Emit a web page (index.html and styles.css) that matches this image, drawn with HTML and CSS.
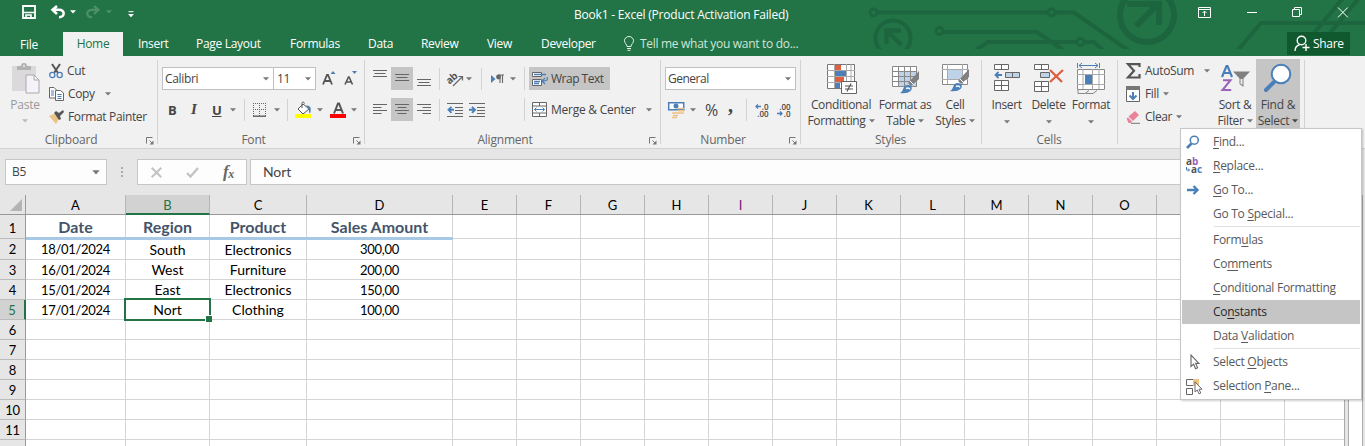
FILE: index.html
```html
<!DOCTYPE html>
<html lang="en">
<head>
<meta charset="utf-8">
<title>Book1 - Excel</title>
<link rel="stylesheet" href="styles.css">
</head>
<body>
<svg class="defs" width="0" height="0">
  <defs>
    <symbol id="dd" viewBox="0 0 6 4"><path d="M0 0.200h6L3 3.600z" fill="currentColor"/></symbol>
    <symbol id="launch" viewBox="0 0 8 8"><path d="M0.5 6.5v-6h6M3.5 3.5l3 3" fill="none" stroke="#777"/><path d="M7.5 3.5v4h-4z" fill="#777"/></symbol>
    <symbol id="brush" viewBox="0 0 20 24"><path d="M19 1v8l-8 7-3-3z" fill="#808080"/><path d="M10 11l3.500 3.500" stroke="#fff" stroke-width="1"/><path d="M0 23c4-1 2-8 8-8 3 0 5 3 3 5.500-2.500 3-8 3-11 2.500z" fill="#4a7fb8"/><path d="M6 18.500c2-1 4-.5 3.500 1" stroke="#fff" stroke-width="1.400" fill="none"/></symbol>
    <symbol id="cursor" viewBox="0 0 10 16"><path d="M1 1v11.500l2.600-2.300 2 4.500 2-.9-2-4.400H9z" fill="#fff" stroke="#666" stroke-width="1.100"/></symbol>
  </defs>
</svg>

<header class="top">
  <svg class="art" width="505" height="49" viewBox="860 0 505 49" fill="none" stroke="#1c653e" stroke-width="4">
    <circle cx="873.500" cy="12.500" r="3.500" stroke-width="2.800"/><path d="M877 12.500h170M1055 12.500h19l56 39"/><circle cx="1051.500" cy="12.500" r="3.500" stroke-width="2.800"/>
    <circle cx="893" cy="38" r="17.500"/><path d="M886.500 44V30.500H901M887 31l14.500 14" stroke-width="4.500"/>
    <circle cx="939.500" cy="31" r="3.500" stroke-width="2.800"/><path d="M943 32h94l26 18M976 50l12-8h88M1084 42h10l10 9"/><circle cx="1080.500" cy="42" r="3.500" stroke-width="2.800"/>
    <circle cx="1147" cy="15" r="27" stroke-width="6"/><path d="M1127 4h32v21M1158 4l-22 22" stroke-width="6"/>
    <path d="M1238 50l23-27h104"/><path d="M1314 33l29-35M1330 33l29-35"/>
  </svg>
  <div class="titlebar">
    <div class="quick">
      <svg width="14" height="14" viewBox="0 0 14 14"><path d="M1 1h12v12H1z" fill="none" stroke="#fff" stroke-width="1.800"/><path d="M1 7.500h12M4 13v-3h5v3" stroke="#fff" stroke-width="1.600" fill="none"/></svg>
      <svg class="undo" width="14" height="14" viewBox="0 0 14 14"><path d="M6 1L1.500 4.800 6 9M2 4.800h6c6.500 0 6 7.400 0 7.400" fill="none" stroke="#fff" stroke-width="2.500"/></svg>
      <svg class="tri" width="6" height="4"><use href="#dd"/></svg>
      <svg class="redo" width="14" height="14" viewBox="0 0 14 14"><path d="M8 1l4.500 3.800L8 9M12 4.800H6c-6.500 0-6 7.400 0 7.400" fill="none" stroke="#4f9069" stroke-width="2.200"/></svg>
      <svg class="tri dim" width="6" height="4"><use href="#dd"/></svg>
      <svg class="more" width="6" height="7" viewBox="0 0 6 7"><path d="M.5 .7h5" stroke="#fff"/><path d="M0 3h6L3 6.300z" fill="#fff"/></svg>
    </div>
    <div class="title">Book1 - Excel (Product Activation Failed)</div>
    <div class="win">
      <svg width="13" height="11" viewBox="0 0 13 11" fill="none" stroke="#fff"><path d="M.5 .5h12v10H.5zM.5 2.500h12M6.500 9V4M4.500 6l2-2 2 2"/></svg>
      <svg width="10" height="11" viewBox="0 0 10 11"><path d="M0 5.500h10" stroke="#fff"/></svg>
      <svg width="10" height="11" viewBox="0 0 10 11" fill="none" stroke="#fff"><path d="M.5 2.500h7v7h-7zM2.500 2.500v-2h7v7H7.500"/></svg>
      <svg width="10" height="11" viewBox="0 0 10 11" stroke="#fff"><path d="M0 .5l9.800 9.800M9.800 .5L0 10.300"/></svg>
    </div>
  </div>
  <nav class="tabs">
    <span class="tab file">File</span><span class="tab on">Home</span><span class="tab t3">Insert</span><span class="tab t4">Page Layout</span><span class="tab t5">Formulas</span><span class="tab t6">Data</span><span class="tab t7">Review</span><span class="tab t8">View</span><span class="tab t9">Developer</span>
    <span class="tell"><svg width="10" height="15" viewBox="0 0 10 15" fill="none" stroke="#e3f1e8"><path d="M3 10.500c0-2.500-2.500-3-2.500-5.800a4.500 4.200 0 0 1 9 0c0 2.800-2.500 3.300-2.500 5.800zM3 12.500h4M3.500 14.300h3"/></svg>Tell me what you want to do...</span>
    <span class="share"><svg width="16" height="17" viewBox="0 0 16 17" fill="none" stroke="#fff" stroke-width="1.400"><circle cx="7.500" cy="5.500" r="4.300"/><path d="M1 16c0-3 1.500-5.500 4.500-6.300M12 9v7M8.500 12.500h7"/></svg>Share</span>
  </nav>
</header>

<section class="ribbon">
  <div class="group g-clip">
    <div class="body">
      <div class="big paste"><svg width="29" height="31" viewBox="0 0 29 31"><path d="M1 3h24v25H1z" fill="#dcd9dc"/><path d="M6 7V3h4a3 3 0 0 1 6 0h4v4z" fill="#b3b3b3"/><circle cx="13" cy="3" r="1" fill="#eee"/><path d="M15 12h8l5 5v13H15z" fill="#f6f2f9" stroke="#aaa"/><path d="M23 12v5h5" fill="none" stroke="#aaa"/></svg><span>Paste</span><svg class="arr" width="6" height="4"><use href="#dd"/></svg></div>
      <div class="stack">
        <div class="line"><svg width="14" height="16" viewBox="0 0 14 16" fill="none"><path d="M3 1l6 9M11 1L5 10" stroke="#555" stroke-width="2"/><circle cx="3.300" cy="12" r="2.600" stroke="#4a7fb8" stroke-width="1.300"/><circle cx="10.700" cy="12" r="2.600" stroke="#4a7fb8" stroke-width="1.300"/></svg><span>Cut</span></div>
        <div class="line"><svg width="15" height="14" viewBox="0 0 15 14" fill="#fff" stroke="#666"><path d="M.5 .5H5l2.500 2.500v8h-7z"/><path d="M6.500 3.500h5l3 2.500v7.500h-8z"/><path d="M2 4h3M2 6h3M2 8h3M8.500 7.500h4M8.500 9.500h4M8.500 11.500h4" stroke="#4a7fb8"/></svg><span>Copy</span><svg class="arr wide" width="6" height="4"><use href="#dd"/></svg></div>
        <div class="line"><svg width="15" height="14" viewBox="0 0 15 14"><path d="M0 6l5-2 5 5-3 5z" fill="#edc283"/><path d="M5 3l2-2 3 2 4-3 1 2-4 4 1 3-2 1z" fill="#555"/></svg><span>Format Painter</span></div>
      </div>
    </div>
    <div class="label">Clipboard<svg class="launch" width="8" height="8"><use href="#launch"/></svg></div>
  </div>

  <div class="group g-font">
    <div class="body rows">
      <div class="row">
        <div class="combo name"><span>Calibri</span><svg width="6" height="4"><use href="#dd"/></svg></div><div class="combo size"><span>11</span><svg width="6" height="4"><use href="#dd"/></svg></div>
        <svg class="ml6" width="13" height="15" viewBox="0 0 13 15"><path d="M1 13.500L5 4h1l4 9.500M2.700 10h6" fill="none" stroke="#555" stroke-width="1.800"/><path d="M8.500 3L11 0l2.500 3z" fill="#4a7fb8"/></svg>
        <svg class="ml9" width="13" height="15" viewBox="0 0 13 15"><path d="M1 13.500L4.500 6h.6l3.400 7.500M2.500 11h4.500" fill="none" stroke="#555" stroke-width="1.600"/><path d="M8 0h5l-2.500 3z" fill="#4a7fb8"/></svg>
      </div>
      <div class="row second">
        <b class="bold">B</b><i class="ital">I</i><b class="under">U</b><svg class="arr ml9" width="6" height="4"><use href="#dd"/></svg><span class="bar bar-a"></span>
        <svg width="13" height="14" viewBox="0 0 13 14" stroke="#666" fill="none"><path d="M0 .5h13M0 6.500h13M.5 0v13M6.500 0v13M12.500 0v13" stroke-dasharray="1 1"/><path d="M0 13.200h13" stroke-width="1.500"/></svg><svg class="arr ml8" width="6" height="4"><use href="#dd"/></svg><span class="bar bar-b"></span>
        <svg width="17" height="17" viewBox="0 0 17 17"><path d="M3 8l5-5 6 5-6 5z" fill="#fff" stroke="#555"/><path d="M7 7V2.500c0-2 2-2 2.500 0" stroke="#555" fill="none"/><path d="M11 4.500c4-.5 6 2.500 4 8-1.500-1-1-3-1-4z" fill="#4a7fb8"/><path d="M0 13h16v4H0z" fill="#ff0"/></svg><svg class="arr ml5" width="6" height="4"><use href="#dd"/></svg>
        <svg class="ml7" width="16" height="17" viewBox="0 0 16 17"><path d="M4 12.500L8 2.500h1l4 10M5.500 9h6" fill="none" stroke="#555" stroke-width="2"/><path d="M0 13h16v4H0z" fill="#f00"/></svg><svg class="arr ml5" width="6" height="4"><use href="#dd"/></svg>
      </div>
    </div>
    <div class="label">Font<svg class="launch" width="8" height="8"><use href="#launch"/></svg></div>
  </div>

  <div class="group g-align">
    <div class="body split">
      <div class="rows al">
        <div class="row">
          <span class="ib"><svg width="14" height="22" viewBox="0 0 14 22" stroke="#666"><path d="M0 3.500h14M1.500 6.500h11M0 9.500h14"/></svg></span><span class="ib sel"><svg width="14" height="22" viewBox="0 0 14 22" stroke="#666"><path d="M0 7.500h14M1.500 10.500h11M0 13.500h14"/></svg></span><span class="ib"><svg width="14" height="22" viewBox="0 0 14 22" stroke="#666"><path d="M0 12.500h14M1.500 15.500h11M0 18.500h14"/></svg></span>
          <span class="bar"></span>
          <svg class="ml7" width="17" height="16" viewBox="0 0 17 16"><text x="0" y="11" class="abtxt" transform="rotate(-42 5 9)">ab</text><path d="M6 15L15 6M11.500 5.500h4v4" fill="none" stroke="#666" stroke-width="1.200"/></svg><svg class="arr ml2" width="6" height="4"><use href="#dd"/></svg>
          <span class="bar ml8"></span>
          <svg class="ml9" width="13" height="10" viewBox="0 0 13 10"><path d="M0 1l4.500 4L0 9z" fill="#4a7fb8"/><path d="M7 1h6M9 1v8M11.500 1v8" stroke="#666" stroke-width="1.100"/><circle cx="7.500" cy="3" r="2.400" fill="#666"/></svg><svg class="arr ml6" width="6" height="4"><use href="#dd"/></svg>
        </div>
        <div class="row second">
          <span class="ib"><svg width="14" height="22" viewBox="0 0 14 22" stroke="#666"><path d="M0 6.500h14M0 9.500h8.500M0 12.500h14M0 15.500h8.500"/></svg></span><span class="ib sel"><svg width="14" height="22" viewBox="0 0 14 22" stroke="#666"><path d="M0 6.500h14M2.500 9.500h9M0 12.500h14M2.500 15.500h9"/></svg></span><span class="ib"><svg width="14" height="22" viewBox="0 0 14 22" stroke="#666"><path d="M0 6.500h14M5.500 9.500H14M0 12.500h14M5.500 15.500H14"/></svg></span>
          <span class="bar"></span>
          <svg class="ml7" width="16" height="14" viewBox="0 0 16 14" stroke="#666"><path d="M0 .5h16M8 4.500h8M8 7.500h8M8 10.500h8M0 13.500h16"/><path d="M7 6.800H2M4.500 3.800l-3 3 3 3" stroke="#4a7fb8" stroke-width="1.900" fill="none"/></svg>
          <svg class="ml6" width="16" height="14" viewBox="0 0 16 14" stroke="#666"><path d="M0 .5h16M8 4.500h8M8 7.500h8M8 10.500h8M0 13.500h16"/><path d="M0 6.800h6M3 3.800l3 3-3 3" stroke="#4a7fb8" stroke-width="1.900" fill="none"/></svg>
        </div>
      </div>
      <div class="rows wrap">
        <div class="row"><span class="wraptext"><svg width="17" height="16" viewBox="0 0 17 16" fill="none" stroke="#666"><path d="M.5 1.500h9v4h-9zM.5 8.500h9v6h-9z" fill="#fff"/><path d="M2 3.500h12M2 10.500h6M2 12.500h5M15 6c1.500 3-.5 4-4 4M13 7l-3 3 3 3" stroke="#4a7fb8" stroke-width="1.300"/></svg><span>Wrap Text</span></span></div>
        <div class="row second merge"><svg width="15" height="15" viewBox="0 0 15 15" fill="#fff" stroke="#666"><path d="M.5 .5h14v14H.5zM.5 4h14M.5 11h14M7.500 .5V4M7.500 11v3.500"/><path d="M2.500 7.500h10M4.500 5.500l-2 2 2 2M10.500 5.500l2 2-2 2" stroke="#4a7fb8" fill="none"/></svg><span>Merge &amp; Center</span><svg class="arr" width="6" height="4"><use href="#dd"/></svg></div>
      </div>
    </div>
    <div class="label">Alignment<svg class="launch" width="8" height="8"><use href="#launch"/></svg></div>
  </div>

  <div class="group g-num">
    <div class="body rows">
      <div class="row"><div class="combo general"><span>General</span><svg width="6" height="4"><use href="#dd"/></svg></div></div>
      <div class="row second">
        <svg class="ml7" width="17" height="17" viewBox="0 0 17 17"><path d="M.7 1.700h15v7H.7z" fill="#fff" stroke="#4a7fb8" stroke-width="1.500"/><circle cx="8" cy="5" r="2.500" fill="#4a7fb8"/><path d="M9 7.500h7M10 9.800h6.500M9 12h7M4 12h5M5 14.500h5M4 16.500h5" stroke="#edc283" stroke-width="1.500"/></svg>
        <svg class="arr ml5" width="6" height="4"><use href="#dd"/></svg>
        <span class="pct">%</span><span class="comma">,</span><span class="bar"></span>
        <span class="dec"><span><svg width="6" height="5" viewBox="0 0 6 5"><path d="M6 2.500H1M3 .5l-2 2 2 2" fill="none" stroke="#4a7fb8" stroke-width="1.300"/></svg>.0</span><span>.00</span></span><span class="dec d2"><span>.00</span><span><svg width="6" height="5" viewBox="0 0 6 5"><path d="M0 2.500h5M3 .5l2 2-2 2" fill="none" stroke="#4a7fb8" stroke-width="1.300"/></svg>.0</span></span>
      </div>
    </div>
    <div class="label">Number<svg class="launch" width="8" height="8"><use href="#launch"/></svg></div>
  </div>

  <div class="group g-styles">
    <div class="body">
      <div class="big b1"><svg width="31" height="31" viewBox="0 0 31 31"><path d="M1.500 1.500h27v24h-27z" fill="#fff" stroke="#777"/><path d="M8.500 1v24M20.500 1v24M25 1v24M1 7.500h28M1 13.500h28M1 19.500h28" stroke="#aaa"/><path d="M9 2h6v5H9zM9 14h9v5H9z" fill="#dc6040"/><path d="M9 8h11v5H9zM9 20h5v5H9z" fill="#4a7fb8"/><path d="M15.500 18.500h15v12h-15z" fill="#fff" stroke="#666"/><path d="M19 23h8M19 26h8M25 20.500l-4 8" stroke="#555" stroke-width="1.200"/></svg><span>Conditional</span><span>Formatting<svg class="arr" width="6" height="4"><use href="#dd"/></svg></span></div>
      <div class="big b2"><svg width="31" height="31" viewBox="0 0 31 31"><path d="M2.500 3.500h24v20h-24z" fill="#fff"/><path d="M9 9h18v15H9z" fill="#bfd3e8"/><path d="M2.500 3.500h24v20h-24zM2.500 8.500h24M2.500 13.500h24M2.500 18.500h24M8.500 3.500v20M14.500 3.500v20M20.500 3.500v20" fill="none" stroke="#888"/><use href="#brush" x="10" y="7" width="20" height="24"/></svg><span>Format as</span><span>Table<svg class="arr" width="6" height="4"><use href="#dd"/></svg></span></div>
      <div class="big b3"><svg width="31" height="31" viewBox="0 0 31 31"><path d="M2.500 1.500h25v20h-25z" fill="#fff" stroke="#888"/><path d="M7.500 1v20M22.500 1v20M2 6.500h26M2 16.500h26" stroke="#aaa"/><path d="M8 7h14v9H8z" fill="#bfd3e8"/><use href="#brush" x="10" y="5" width="20" height="24"/></svg><span>Cell</span><span>Styles<svg class="arr" width="6" height="4"><use href="#dd"/></svg></span></div>
    </div>
    <div class="label">Styles</div>
  </div>

  <div class="group g-cells">
    <div class="body">
      <div class="big c1"><svg width="27" height="31" viewBox="0 0 27 31" fill="#fff" stroke="#666"><path d="M1.500 1.500h14v5h-14zM8.500 1.500v5M1.500 17.500h14v10h-14zM8.500 17.500v10M1.500 22.500h14"/><path d="M12.500 9.500h14v5h-14zM19.500 9.500v5" fill="#bfd3e8"/><path d="M9 12H3M5.500 9l-3 3 3 3" fill="none" stroke="#4a7fb8" stroke-width="1.800"/></svg><span>Insert</span><svg class="arr lower" width="6" height="4"><use href="#dd"/></svg></div>
      <div class="big c2"><svg width="31" height="31" viewBox="0 0 31 31" fill="#fff" stroke="#666"><path d="M1.500 1.500h14v5h-14zM8.500 1.500v5M1.500 18.500h14v10h-14zM8.500 18.500v10M1.500 23.500h14"/><path d="M7.500 9.500h9v5h-9z" fill="#bfd3e8"/><path d="M17 7l12 12M30 7L17 19" stroke="#dc6040" stroke-width="2.300"/></svg><span>Delete</span><svg class="arr lower" width="6" height="4"><use href="#dd"/></svg></div>
      <div class="big c3"><svg width="29" height="31" viewBox="0 0 29 31" fill="#fff" stroke="#888"><path d="M.5 6.500h27v20h-27z"/><path d="M6 6v20M15.500 6v20M22 6v20M0 11.500h28M0 21.500h28" stroke="#aaa"/><path d="M1 30.500h7l4-3M1 30.500V27M9 30.500h7l4-3" fill="none"/><path d="M8 12h7v9H8z" fill="#4a7fb8" stroke="none"/><path d="M.5 0v5M22.500 0v5M2 2.500h19M5 0L2 2.500 5 5M18 0l3 2.500L18 5" fill="none" stroke="#4a7fb8"/></svg><span>Format</span><svg class="arr lower" width="6" height="4"><use href="#dd"/></svg></div>
    </div>
    <div class="label">Cells</div>
  </div>

  <div class="group g-edit">
    <div class="body">
      <div class="stack">
        <div class="line"><svg width="15" height="16" viewBox="0 0 15 16"><path d="M13.500 4V1.200H2l6 6.600-6 6.700h11.500V11" fill="none" stroke="#555" stroke-width="2.200"/></svg><span>AutoSum</span><svg class="arr wide" width="6" height="4"><use href="#dd"/></svg></div>
        <div class="line"><svg width="15" height="16" viewBox="0 0 15 16"><path d="M.5 1.500h13v14H.5z" fill="#fff" stroke="#666"/><path d="M0 0h14v4H0z" fill="#777"/><path d="M7 6v7M3.500 9.500L7 13l3.500-3.500" fill="none" stroke="#4a7fb8" stroke-width="2"/></svg><span>Fill</span><svg class="arr" width="6" height="4"><use href="#dd"/></svg></div>
        <div class="line"><svg width="15" height="14" viewBox="0 0 15 14"><path d="M2.500 6.500L9 1l4 4-6 6z" fill="#e8839a"/><path d="M.5 8.500l1.500-1 4 4-1 1.500H2.500z" fill="#e8839a"/><path d="M5 13.300h9" stroke="#777"/></svg><span>Clear</span><svg class="arr" width="6" height="4"><use href="#dd"/></svg></div>
      </div>
      <div class="big e1"><svg width="31" height="31" viewBox="0 0 31 31"><path d="M2 14L6.500 3h1L12 14M3.500 10h7" fill="none" stroke="#4a7fb8" stroke-width="2.200"/><path d="M3 17.200h7.500l-8 9.800h8.700" fill="none" stroke="#9a62b8" stroke-width="2"/><path d="M13 8.500h17l-6.500 7V24l-4-3v-5.500z" fill="#808080"/><path d="M20.500 16v4.500l2 1.500v-6z" fill="#eee"/></svg><span>Sort &amp;</span><span>Filter<svg class="arr" width="6" height="4"><use href="#dd"/></svg></span></div>
      <div class="big e2"><svg width="31" height="31" viewBox="0 0 31 31"><path d="M3 27l8-8" stroke="#4a7fb8" stroke-width="4" stroke-linecap="round"/><circle cx="18" cy="11" r="9.300" fill="#fff" stroke="#4a7fb8" stroke-width="2"/></svg><span>Find &amp;</span><span>Select<svg class="arr" width="6" height="4"><use href="#dd"/></svg></span></div>
    </div>
  </div>
</section>

<section class="fbar">
  <div class="namebox"><span>B5</span><svg width="8" height="5" viewBox="0 0 6 4"><use href="#dd"/></svg></div>
  <svg class="dots" width="2" height="10" fill="#aaa"><path d="M0 0h2v2H0zM0 4h2v2H0zM0 8h2v2H0z"/></svg>
  <div class="fbtns"><svg width="11" height="11" viewBox="0 0 11 11"><path d="M.7 .7l9.600 9.600M10.300 .7L.7 10.300" stroke="#c3c3c3" stroke-width="2"/></svg><svg width="13" height="11" viewBox="0 0 13 11"><path d="M1 6l3.500 3.500L12 1" fill="none" stroke="#c3c3c3" stroke-width="2.300"/></svg><span class="fx">f<sub>x</sub></span></div>
  <div class="formula">Nort</div>
</section>

<main class="sheetwrap">
  <div class="sheet">
    <div class="r cols"><span class="h corner"><svg width="12" height="12"><path d="M12 0v12H0z" fill="#b4b4b4"/></svg></span><span class="ch">A</span><span class="ch act">B</span><span class="ch">C</span><span class="ch">D</span><span class="ch">E</span><span class="ch">F</span><span class="ch">G</span><span class="ch">H</span><span class="ch purple">I</span><span class="ch">J</span><span class="ch">K</span><span class="ch">L</span><span class="ch">M</span><span class="ch">N</span><span class="ch">O</span><span class="ch"></span><span class="ch"></span><span class="ch"></span></div>
    <div class="r head"><span class="h">1</span><span class="c">Date</span><span class="c">Region</span><span class="c">Product</span><span class="c">Sales Amount</span><span class="rest"></span></div>
    <div class="r two"><span class="h">2</span><span class="c n">18/01/2024</span><span class="c">South</span><span class="c">Electronics</span><span class="c n">300,00</span><span class="rest"></span></div>
    <div class="r"><span class="h">3</span><span class="c n">16/01/2024</span><span class="c">West</span><span class="c">Furniture</span><span class="c n">200,00</span><span class="rest"></span></div>
    <div class="r"><span class="h">4</span><span class="c n">15/01/2024</span><span class="c">East</span><span class="c">Electronics</span><span class="c n">150,00</span><span class="rest"></span></div>
    <div class="r"><span class="h act">5</span><span class="c n">17/01/2024</span><span class="c cur">Nort</span><span class="c">Clothing</span><span class="c n">100,00</span><span class="rest"></span></div>
    <div class="r"><span class="h">6</span><span class="c"></span><span class="c"></span><span class="c"></span><span class="c"></span><span class="rest"></span></div>
    <div class="r"><span class="h">7</span><span class="c"></span><span class="c"></span><span class="c"></span><span class="c"></span><span class="rest"></span></div>
    <div class="r"><span class="h">8</span><span class="c"></span><span class="c"></span><span class="c"></span><span class="c"></span><span class="rest"></span></div>
    <div class="r"><span class="h">9</span><span class="c"></span><span class="c"></span><span class="c"></span><span class="c"></span><span class="rest"></span></div>
    <div class="r"><span class="h">10</span><span class="c"></span><span class="c"></span><span class="c"></span><span class="c"></span><span class="rest"></span></div>
    <div class="r"><span class="h">11</span><span class="c"></span><span class="c"></span><span class="c"></span><span class="c"></span><span class="rest"></span></div>
    <div class="r"><span class="h"></span><span class="c"></span><span class="c"></span><span class="c"></span><span class="c"></span><span class="rest"></span></div>
  </div>
  <div class="scroll"></div>
</main>

<div class="menu">
  <div class="mi"><svg width="16" height="16" viewBox="0 0 16 16"><path d="M2 14l4.500-4.500" stroke="#4a7fb8" stroke-width="2.600"/><circle cx="9.300" cy="6.200" r="4" fill="#fff" stroke="#4a7fb8" stroke-width="1.500"/></svg><span><u>F</u>ind...</span></div>
  <div class="mi"><svg width="18" height="18" viewBox="0 0 18 18" class="rep"><text x="1" y="8" fill="#555">a<tspan fill="#9a62b8">b</tspan></text><text x="6" y="16" fill="#555">a<tspan fill="#4a7fb8">c</tspan></text><path d="M1.500 10v3h3M3 11.500l1.500 1.500L3 14.500" fill="none" stroke="#4a7fb8"/></svg><span><u>R</u>eplace...</span></div>
  <div class="mi"><svg width="16" height="16" viewBox="0 0 16 16"><path d="M2 8h10M8.500 4l4 4-4 4" fill="none" stroke="#4a7fb8" stroke-width="2.300"/></svg><span><u>G</u>o To...</span></div>
  <div class="mi"><span>Go To <u>S</u>pecial...</span></div>
  <div class="sep"></div>
  <div class="mi"><span>Form<u>u</u>las</span></div>
  <div class="mi"><span>Co<u>m</u>ments</span></div>
  <div class="mi"><span><u>C</u>onditional Formatting</span></div>
  <div class="mi hot"><span>Co<u>n</u>stants</span></div>
  <div class="mi"><span>Data <u>V</u>alidation</span></div>
  <div class="sep"></div>
  <div class="mi"><svg width="16" height="16" viewBox="0 0 16 16"><use href="#cursor" x="5" y="0" width="10" height="16"/></svg><span>Select <u>O</u>bjects</span></div>
  <div class="mi"><svg width="17" height="17" viewBox="0 0 17 17"><path d="M8 1h6v7H8z" fill="#edc283"/><path d="M8 1.500H1.500v6H8M1.500 10.500h6v6h-6z" fill="none" stroke="#666"/><use href="#cursor" x="9" y="3" width="9" height="14"/></svg><span>Selection <u>P</u>ane...</span></div>
</div>
</body>
</html>
```

FILE: styles.css
```css
* { box-sizing: border-box; }
body { margin: 0; width: 1365px; height: 446px; overflow: hidden; background: #e6e6e6; font: 12px/16px "Open Sans", "Noto Sans", sans-serif; letter-spacing: -0.35px; color: #444; }
svg { display: block; flex: none; overflow: visible; }
.defs { position: absolute; }
.arr { color: #777; }

.top { position: relative; height: 56px; background: #227447; color: #fff; }
.art { position: absolute; left: 860px; top: 0; overflow: hidden; }
.titlebar { position: relative; height: 32px; display: flex; }
.quick { display: flex; width: 574px; padding: 5px 0 0 22px; }
.quick .undo { margin-left: 15px; }
.quick .tri { margin: 5px 0 0 5px; }
.quick .redo { margin-left: 10px; }
.quick .dim { color: #4f9069; margin-left: 6px; }
.quick .more { margin: 6px 0 0 16px; }
.title { width: 624px; padding-top: 7px; letter-spacing: -0.2px; }
.win { display: flex; justify-content: space-between; width: 150px; padding-top: 7px; }
.tabs { position: relative; display: flex; height: 24px; line-height: 24px; letter-spacing: -0.3px; }
.tab { white-space: nowrap; }
.file { width: 63px; text-align: center; padding-right: 5px; padding-top: 1px; }
.on { width: 60px; background: #f1f1f1; color: #227447; text-align: center; }
.t3 { width: 58px; padding-left: 15px; }
.t4 { width: 94px; padding-left: 15px; }
.t5 { width: 78px; padding-left: 15px; }
.t6 { width: 53px; padding-left: 15px; }
.t7 { width: 66px; padding-left: 15px; }
.t8 { width: 54px; padding-left: 15px; }
.t9 { width: 98px; padding-left: 15px; }
.tell { display: flex; gap: 6px; width: 663px; color: #cfe5d8; }
.tell svg { margin-top: 4px; }
.share { display: flex; align-items: center; gap: 3px; width: 63px; height: 23px; padding-left: 7px; background: #10592f; }

.ribbon { display: flex; height: 93px; background: #f1f1f1; border-bottom: 1px solid #d2d2d2; }
.group { display: flex; flex-direction: column; position: relative; padding-top: 3px; }
.group::after { content: ""; position: absolute; right: 0; top: 4px; bottom: 4px; width: 1px; background: #d2d2d2; }
.g-clip { width: 158px; }
.g-font { width: 207px; }
.g-align { width: 296px; }
.g-num { width: 140px; }
.g-styles { width: 181px; }
.g-cells { width: 136px; }
.g-edit { width: 187px; }
.body { display: flex; height: 69px; white-space: nowrap; }
.label { display: flex; justify-content: center; padding-top: 4px; color: #666; letter-spacing: -0.2px; position: relative; padding-right: 16px; }
.g-styles .label, .g-cells .label { padding-right: 2px; }
.launch { position: absolute; right: 4px; top: 9px; }
.stack { display: flex; flex-direction: column; }
.line { display: flex; align-items: center; gap: 4px; height: 23px; }
.line .wide { margin-left: 6px; }
.g-clip .stack { padding-left: 5px; }
.big { display: flex; flex-direction: column; align-items: center; padding-top: 4px; }
.big > span { display: flex; align-items: center; gap: 3px; height: 16px; }
.big > svg:first-child { margin-bottom: 3px; }
.big .lower { margin-top: 7px; }
.paste { width: 44px; padding-left: 6px; color: #999; letter-spacing: -0.2px; }
.paste .arr { color: #bbb; margin-top: 6px; }

.rows { flex-direction: column; }
.row { display: flex; align-items: center; height: 23px; margin-top: 8px; }
.g-font .row { padding-left: 4px; }
.combo { display: flex; align-items: center; justify-content: space-between; height: 23px; padding: 0 4px 0 2px; border: 1px solid #c0c0c0; background: #fff; color: #444; }
.combo svg { color: #777; }
.name { width: 112px; }
.size { width: 43px; margin-left: -1px; padding-left: 3px; }
.general { width: 131px; margin-left: 4px; letter-spacing: -0.5px; }
.ml2 { margin-left: 2px; } .ml5 { margin-left: 5px; } .ml6 { margin-left: 6px; } .ml7 { margin-left: 7px; } .ml8 { margin-left: 8px; } .ml9 { margin-left: 9px; }
.bar { width: 1px; height: 22px; background: #d2d2d2; }
.bold { font-size: 13px; width: 23px; padding-left: 6px; }
.ital { font: italic bold 15px "Liberation Serif", serif; width: 20px; padding-left: 6px; }
.under { font-size: 13px; width: 16px; padding-left: 7px; text-decoration: underline; }
.bar-a { margin: 0 8px; }
.bar-b { margin: 0 7px; }
.ib { display: flex; justify-content: center; width: 22px; height: 23px; }
.sel { background: #c5c5c5; }
.al { display: flex; width: 159px; }
.al .row { padding-left: 4px; }
.al .bar { margin-left: 4px; }
.al .bar.ml8 { margin-left: 9px; }
.abtxt { font: bold 10px "Open Sans"; fill: #555; }
.wrap { display: flex; }
.wrap .row { border-left: 1px solid #d2d2d2; padding-left: 4px; }
.wraptext { display: flex; align-items: center; gap: 2px; width: 81px; height: 23px; padding-left: 3px; background: #c5c5c5; letter-spacing: -0.5px; }
.merge span { margin: 0 10px 0 4px; letter-spacing: -0.25px; }
.merge svg:first-child { margin-left: 3px; }
.pct { font-size: 16px; margin-left: 9px; }
.comma { font: bold 20px/10px "Liberation Serif", serif; margin: -9px 13px 0 10px; }
.dec { display: flex; flex-direction: column; font-size: 8px; line-height: 7px; font-weight: 600; width: 15px; margin-left: 7px; letter-spacing: 0; align-items: flex-end; }
.dec span { display: flex; align-items: center; height: 7px; gap: 1px; }
.d2 { margin-left: 7px; }
.b1 { width: 80px; } .b2 { width: 48px; } .b3 { width: 52px; }
.g-cells .body { padding-left: 3px; }
.c1 { width: 43px; } .c2 { width: 41px; } .c3 { width: 44px; }
.g-edit .stack { width: 96px; padding-left: 8px; }
.e1 { width: 42px; } .e2 { width: 44px; background: #c5c5c5; letter-spacing: -0.25px; }
.e2 .arr { color: #444; }

.fbar { display: flex; height: 46px; padding: 10px 4px 0 5px; align-items: flex-start; }
.namebox { display: flex; justify-content: space-between; align-items: center; width: 102px; height: 26px; padding: 0 6px; border: 1px solid #c6c6c6; background: #fdfdfd; color: #444; }
.namebox svg { color: #777; }
.dots { margin: 8px 14px 0; }
.fbtns { display: flex; align-items: center; width: 110px; height: 26px; padding-left: 13px; gap: 24px; border: 1px solid #c6c6c6; background: #fdfdfd; }
.fx { font: italic bold 17px "Liberation Serif", serif; color: #666; }
.fx sub { font-size: 12px; vertical-align: -1px; }
.formula { flex: 1; height: 26px; margin-left: 3px; padding-left: 12px; border: 1px solid #c6c6c6; background: #fdfdfd; font: 14px/24px Lato, sans-serif; letter-spacing: -0.1px; }

.sheetwrap { display: flex; font-family: Lato, sans-serif; font-size: 14px; letter-spacing: 0; color: #000; }
.sheet { width: 1345px; height: 251px; overflow: hidden; background: #fff; border-right: 1px solid #ababab; }
.r { display: grid; grid-template-columns: 26px 100px 84px 97px 146px 1fr; grid-template-rows: 100%; height: 20px; line-height: 20px; text-align: center; }
.cols { grid-template-columns: 26px 100px 84px 97px 146px repeat(13, 64px) 60px; background: #e6e6e6; border-bottom: 1px solid #999; font-size: 13px; }
.ch { border-right: 1px solid #b5b5b5; }
.ch.act { background: #d2d2d2; color: #227447; height: 20px; border-bottom: 2px solid #227447; }
.purple { color: #7a1878; }
.h { background: #e6e6e6; border-right: 1px solid #999; border-bottom: 1px solid #bbb; font-size: 13px; letter-spacing: -0.2px; }
.corner { display: flex; justify-content: flex-end; padding: 4px 3px 0 0; border-bottom: 0; }
.h.act { background: #d2d2d2; color: #227447; border-right: 2px solid #227447; }
.c { border-right: 1px solid #d4d4d4; border-bottom: 1px solid #d4d4d4; }
.n { font-size: 13px; letter-spacing: -0.3px; }
.rest { border-bottom: 1px solid #d4d4d4; background: repeating-linear-gradient(90deg, transparent 0 63px, #d4d4d4 63px 64px); }
.head { height: 24px; line-height: 23px; }
.head .c { position: relative; font-weight: bold; font-size: 16px; color: #44546a; border-bottom: 0; }
.head .c::after { content: ""; position: absolute; left: 0; right: -1px; bottom: -1px; height: 3px; background: #a9c8e6; }
.two { height: 21px; line-height: 21px; }
.head .h { line-height: 27px; }
.cur { position: relative; }
.cur::before { content: ""; position: absolute; left: -2px; right: -2px; top: -2px; bottom: -2px; border: 2px solid #227447; }
.cur::after { content: ""; position: absolute; right: -3px; bottom: -3px; width: 6px; height: 6px; background: #227447; border: solid #fff; border-width: 1px 0 0 1px; }
.scroll { width: 15px; height: 251px; margin-left: 3px; background: #fff; border: solid #ababab; border-width: 0 1px; }

.menu { position: absolute; left: 1180px; top: 128px; width: 182px; height: 272px; padding: 1px; border: 1px solid #c6c6c6; background: #fff; box-shadow: 1px 1px 2px rgba(0,0,0,.2); color: #595959; letter-spacing: -0.27px; }
.mi { display: grid; grid-template-columns: 31px 1fr; align-items: center; height: 24px; white-space: nowrap; }
.mi span { grid-column: 2; }
.mi svg { margin-left: 3px; grid-row: 1; }
.mi u { text-underline-offset: 2px; }
.hot { background: #c5c5c5; color: #262626; }
.sep { height: 2px; margin-left: 32px; border-top: 1px solid #e1e1e1; }
.rep { font: bold 10px "Open Sans"; letter-spacing: 0; }
```
